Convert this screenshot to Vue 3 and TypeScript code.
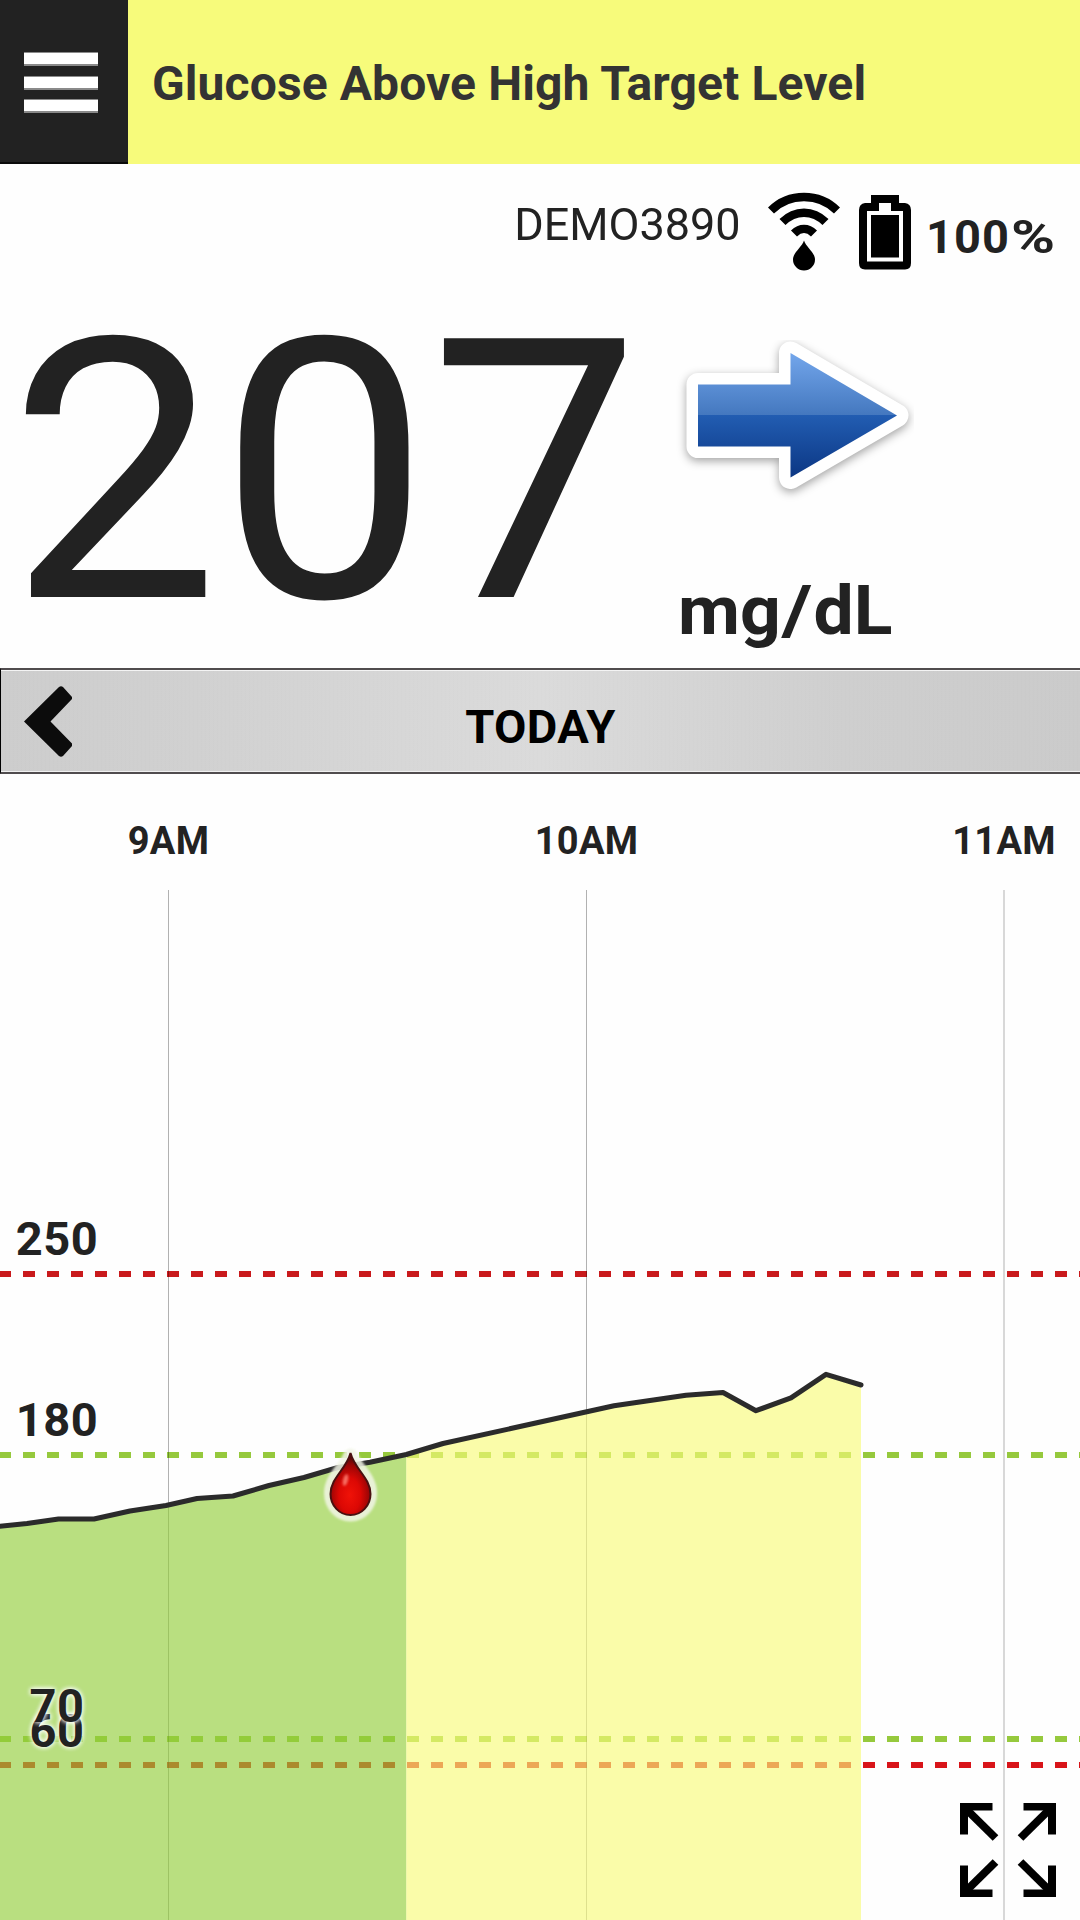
<script setup lang="ts">
interface Point {
  x: number
  y: number
}

const deviceName = 'DEMO3890'
const battery = 100
const glucose = 207

// Chart geometry: the plot is 1080 x 1146 user units
const bottom = 1146
const hours = [
  { label: '9AM', x: 168 },
  { label: '10AM', x: 586 },
  { label: '11AM', x: 1003.5 },
]

const limits = [
  { value: 250, y: 500, color: '#c91a1c', textY: 481.2 },
  { value: 180, y: 681, color: '#96c93d', textY: 662.3 },
  { value: 60, y: 991, color: '#d81419', textY: 973 },
  { value: 70, y: 965, color: '#96c93d', textY: 948 },
]

const inRange: Point[] = [
  { x: -4, y: 752.6 },
  { x: 27, y: 749.5 },
  { x: 58.5, y: 745 },
  { x: 94, y: 745 },
  { x: 130, y: 737 },
  { x: 166, y: 731.5 },
  { x: 197, y: 724.5 },
  { x: 233, y: 722 },
  { x: 269, y: 711.5 },
  { x: 304, y: 703.5 },
  { x: 338, y: 693.5 },
  { x: 370, y: 688.3 },
  { x: 406.3, y: 680.5 },
]

const aboveRange: Point[] = [
  { x: 406.3, y: 680.5 },
  { x: 443, y: 669.5 },
  { x: 614, y: 631.8 },
  { x: 686, y: 621.3 },
  { x: 723, y: 618.5 },
  { x: 756, y: 636.7 },
  { x: 791, y: 623.8 },
  { x: 826, y: 600.3 },
  { x: 861, y: 611 },
]

const toPath = (pts: Point[]): string =>
  pts.map((p, i) => `${i ? 'L' : 'M'}${p.x} ${p.y}`).join(' ')

const toArea = (pts: Point[]): string =>
  `${toPath(pts)} L${pts[pts.length - 1].x} ${bottom} L${pts[0].x} ${bottom} Z`

const trace = toPath([...inRange, ...aboveRange.slice(1)])
</script>

<template>
  <main class="screen">
    <header class="alert">
      <button class="menu" aria-label="Menu">
        <span class="line"></span>
        <span class="line"></span>
        <span class="line"></span>
      </button>
      <h1 class="title">Glucose Above High Target Level</h1>
    </header>

    <section class="status">
      <span class="device">{{ deviceName }}</span>
      <svg class="signal" width="72" height="80" viewBox="0 0 72 80">
        <g fill="none" stroke="#000" stroke-width="8.5">
          <path d="M3 18.5 C21 0.5 51 0.5 69 18.5" />
          <path d="M14.5 30 C27 17.5 45 17.5 57.5 30" />
          <path d="M26 41.5 C32 35.5 40 35.5 46 41.5" />
        </g>
        <path d="M36 48.5 C38 55 47 60.500 47 67.500 A11 11 0 0 1 25 67.500 C25 60.500 34 55 36 48.500 Z" />
      </svg>
      <svg class="battery" width="52" height="75" viewBox="0 0 52 75">
        <path
          fill-rule="evenodd"
          d="M12 0 H40 V8 H46 Q52 9 52 15 V68 Q52 74.500 46 74.500 H6 Q0 74.500 0 68 V15 Q0 9 6 8 H12 Z M20 8 V16 H8 V66.500 H44 V16 H32 V8 Z"
        />
        <rect x="12" y="20" width="28" height="42.500" />
      </svg>
      <span class="percent">{{ battery }}<span class="sign">%</span></span>
    </section>

    <section class="reading">
      <div class="value">{{ glucose }}</div>
      <div class="trend">
        <svg width="240" height="170" viewBox="0 0 240 170">
          <defs>
            <linearGradient id="arrowFill" x1="0" y1="12" x2="0" y2="138" gradientUnits="userSpaceOnUse">
              <stop offset="0" stop-color="#74a7ec" />
              <stop offset="0.5" stop-color="#4478bf" />
              <stop offset="0.5" stop-color="#225db2" />
              <stop offset="1" stop-color="#0b3683" />
            </linearGradient>
          </defs>
          <g class="arrow">
            <path
              d="M24 44.500 H116.500 V13 L223 75.500 L116.500 137.500 V106.500 H24 Z"
              fill="#fff"
              stroke="#fff"
              stroke-width="23"
              stroke-linejoin="round"
            />
          </g>
          <path
            d="M24 44.500 H116.500 V13 L223 75.500 L116.500 137.500 V106.500 H24 Z"
            fill="url(#arrowFill)"
          />
        </svg>
        <span class="unit">mg<span class="slash">/</span>dL</span>
      </div>
    </section>

    <nav class="day">
      <svg class="back" width="48" height="71" viewBox="0 0 48 71">
        <path d="M0 35.500 L35 1 Q37 -0.500 39 1 L48 11 V13 L26.500 35.500 L48 57.500 V60 L39 70 Q37 71.500 35 70 Z" fill="#0c0c0c" />
      </svg>
      <span class="day-name">TODAY</span>
    </nav>

    <svg class="chart" width="1080" height="1146" viewBox="0 0 1080 1146">
      <defs>
        <radialGradient id="blood" cx="0.48" cy="0.68" r="0.6">
          <stop offset="0" stop-color="#f01208" />
          <stop offset="0.45" stop-color="#dc0804" />
          <stop offset="0.8" stop-color="#9c0505" />
          <stop offset="1" stop-color="#5a0808" />
        </radialGradient>
        <filter id="soft" x="-30%" y="-30%" width="160%" height="160%">
          <feGaussianBlur stdDeviation="1.3" />
        </filter>
      </defs>

      <line
        v-for="l in limits"
        :key="`l${l.value}`"
        x1="-1"
        x2="1080"
        :y1="l.y"
        :y2="l.y"
        :stroke="l.color"
        stroke-width="6"
        stroke-dasharray="12 12"
      />
      <rect
        v-for="h in hours"
        :key="h.label"
        class="grid"
        :x="h.x"
        y="116"
        width="1"
        height="1030"
      />

      <path class="area-ok" :d="toArea(inRange)" />
      <path class="area-high" :d="toArea(aboveRange)" />
      <path class="trace" :d="trace" />

      <text v-for="h in hours" :key="`t${h.label}`" class="hour" :x="h.x + 0.5" y="79.500">{{ h.label }}</text>
      <text v-for="l in limits" :key="`v${l.value}`" class="limit" x="57" :y="l.textY">{{ l.value }}</text>

      <g transform="translate(350.500 0)">
        <path
          d="M0 682 C5 695 19 704 19 719 A19 21 0 0 1 -19 719 C-19 704 -5 695 0 682 Z"
          fill="#f2f5e6"
          stroke="#f2f5e6"
          stroke-width="15"
          stroke-linejoin="round"
          opacity="0.85"
          filter="url(#soft)"
        />
        <path
          d="M0 679 C4 695 20 704 20 720 A20 21 0 0 1 -20 720 C-20 704 -4 695 0 679 Z"
          fill="url(#blood)"
          stroke="#4a1010"
          stroke-width="2"
        />
        <ellipse cx="-5" cy="706" rx="2.500" ry="6" fill="#ff8f80" opacity="0.75" transform="rotate(14 -5 706)" filter="url(#soft)" />
      </g>

      <g transform="translate(1008 1076)">
        <g v-for="s in [[1, 1], [-1, 1], [1, -1], [-1, -1]]" :key="s.join()" :transform="`scale(${s[0]} ${s[1]})`">
          <path d="M-48 -47 H-15.500 V-39.500 H-40 V-15.500 H-48 Z" />
          <path d="M-44 -43 L-12.500 -12" stroke="#000" stroke-width="8" />
        </g>
      </g>
    </svg>
  </main>
</template>

<style>
body {
  margin: 0;
  background: #fefefe;
}
</style>

<style scoped>
.screen {
  width: 1080px;
  height: 1920px;
  overflow: hidden;
  display: flex;
  flex-direction: column;
  background: #fefefe;
  color: #222;
  font-family: Roboto, "Liberation Sans", sans-serif;
}

.alert {
  display: flex;
  flex: none;
  height: 164px;
  background: #f7fb7b;
}

.menu {
  display: flex;
  flex-direction: column;
  gap: 9.500px;
  width: 128px;
  padding: 52px 0 0 24px;
  border: 0;
  border-bottom: 2px solid #0a0a0a;
  background: #222;
  box-sizing: border-box;
}

.line {
  width: 74px;
  height: 14px;
  background: linear-gradient(#8a8a8a 0 1px, #fff 1px 12px, #8a8a8a 12.500px 14px);
}

.title {
  margin: 3px 0 0 24px;
  font-size: 48px;
  line-height: 161px;
  font-weight: 700;
  letter-spacing: 0.1px;
  color: #333;
  white-space: nowrap;
}

.status {
  display: flex;
  flex: none;
  align-items: flex-start;
  justify-content: flex-end;
  height: 124px;
}

.device {
  margin: 38.500px 28px 0 0;
  font-size: 44px;
  line-height: 44px;
  transform: scaleX(1.022);
  transform-origin: right;
}

.signal {
  margin-top: 28px;
}

.battery {
  margin: 30.500px 15px 0 19px;
}

.percent {
  width: 154px;
  margin-top: 50px;
  font-size: 47px;
  line-height: 46px;
  font-weight: 700;
  letter-spacing: 1px;
  white-space: nowrap;
}

.sign {
  display: inline-block;
  margin-left: 1px;
  transform: scaleX(1.27);
  transform-origin: left;
}

.reading {
  display: flex;
  flex: none;
  height: 380px;
}

.value {
  width: 665px;
  padding: 35px 0 0 9px;
  font-size: 364px;
  line-height: 300px;
  transform: scaleX(1.029);
  transform-origin: 20px 0;
}

.trend {
  display: flex;
  flex-direction: column;
  padding-top: 52px;
}

.arrow {
  filter: drop-shadow(0 3px 5px rgba(0, 0, 0, 0.36));
}

.unit {
  margin: 61px 0 0 4px;
  font-size: 69px;
  line-height: 80px;
  font-weight: 700;
  transform: scaleX(1.036);
  transform-origin: left;
}

.slash {
  display: inline-block;
  margin: 0 3px;
  transform: scaleX(1.15);
}

.day {
  display: grid;
  grid-template-columns: 120px 1fr 120px;
  flex: none;
  height: 106px;
  box-sizing: border-box;
  border: solid #504c4e;
  border-width: 2px 0 2px 1px;
  border-left-color: #000;
  box-shadow: inset 0 1px #f4f4f4, inset 0 -1px #f0f0f0;
  background:
    repeating-linear-gradient(90deg, rgba(0, 0, 0, 0.008) 0 1px, transparent 1px 4px),
    linear-gradient(90deg, #cdcdcd, #d1d1d1 18%, #dbdbdb 50%, #cfcfcf 78%, #cbcbcb);
}

.back {
  margin: 15.500px 0 0 23px;
}

.day-name {
  text-align: center;
  font-size: 47px;
  line-height: 106px;
  padding-top: 4px;
  height: 98px;
  font-weight: 700;
  letter-spacing: 0.4px;
  color: #000;
}

.chart {
  display: block;
  flex: none;
}

.grid {
  fill: #000;
  fill-opacity: 0.3;
}

.area-ok {
  fill: #92cd39;
  fill-opacity: 0.64;
}

.area-high {
  fill: #f7fa79;
  fill-opacity: 0.64;
}

.trace {
  fill: none;
  stroke: #2b2b2b;
  stroke-width: 5;
  stroke-linejoin: round;
  stroke-linecap: round;
}

.hour {
  font-size: 38px;
  font-weight: 700;
  fill: #222;
  text-anchor: middle;
  letter-spacing: 0.3px;
}

.limit {
  font-size: 47px;
  font-weight: 700;
  fill: #222;
  text-anchor: middle;
  letter-spacing: 0.5px;
  text-shadow: 0 0 5px #fff, 0 0 5px #fff;
}
</style>
